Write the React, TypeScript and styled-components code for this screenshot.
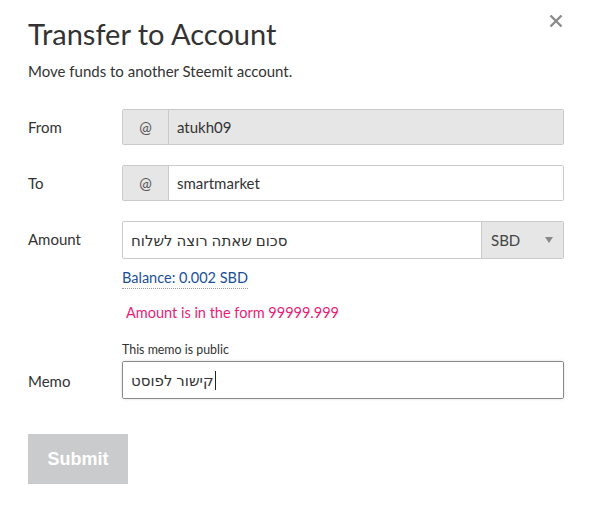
import React from "react";
import styled, { createGlobalStyle } from "styled-components";

const Global = createGlobalStyle`
  html, body { margin: 0; padding: 0; background: #fff; }
  body { font-family: Lato, "Open Sans", sans-serif; color: #333; }
  * { box-sizing: border-box; }
`;

const Modal = styled.div`
  position: relative;
  width: 595px;
  height: 516px;
  padding: 16px 31px 0 28px;
  display: flex;
  flex-direction: column;
  background: #fff;
`;

const Close = styled.button`
  position: absolute;
  top: 12px;
  right: 30px;
  width: 18px;
  height: 18px;
  padding: 0;
  border: 0;
  background: none;
  display: flex;
  align-items: center;
  justify-content: center;
`;

const Title = styled.h1`
  margin: 0;
  font-family: Lato, sans-serif;
  font-weight: 400;
  font-size: 29px;
  line-height: 36px;
  color: #333;
`;

const Subtitle = styled.p`
  margin: 9px 0 0;
  font-size: 15px;
  line-height: 20px;
  color: #333;
`;

const Row = styled.div<{ $mt: number }>`
  display: grid;
  grid-template-columns: 94px 1fr;
  align-items: center;
  margin-top: ${(p) => p.$mt}px;
`;

const Label = styled.label<{ $shift?: number }>`
  font-size: 15px;
  color: #333;
  position: relative;
  top: ${(p) => p.$shift ?? 0}px;
`;

const Group = styled.div<{ $h: number; $focus?: boolean }>`
  display: flex;
  height: ${(p) => p.$h}px;
  border: 1px solid ${(p) => (p.$focus ? "#8a8a8a" : "#cacaca")};
  border-radius: 2px;
  overflow: hidden;
  box-shadow: ${(p) => (p.$focus ? "0 0 3px rgba(0,0,0,0.15)" : "inset 0 1px 2px rgba(0,0,0,0.06)")};
`;

const Addon = styled.span`
  width: 46px;
  flex: none;
  display: flex;
  align-items: center;
  justify-content: center;
  background: #e6e6e6;
  border-right: 1px solid #cacaca;
  color: #555;
  font-size: 15px;
`;

const Field = styled.div<{ $disabled?: boolean }>`
  flex: 1;
  display: flex;
  align-items: center;
  padding: 0 8px;
  background: ${(p) => (p.$disabled ? "#e6e6e6" : "#fff")};
  color: #333;
  font-size: 15px;
  font-family: Lato, "Noto Sans", sans-serif;
`;

const Hebrew = styled.span`
  font-family: "Noto Sans", "DejaVu Sans", sans-serif;
  font-size: 15px;
  direction: rtl;
  unicode-bidi: isolate;
`;

const Caret = styled.span`
  display: inline-block;
  width: 1px;
  height: 19px;
  background: #222;
  margin-left: 1px;
`;

const Select = styled.div`
  width: 82px;
  flex: none;
  display: flex;
  align-items: center;
  justify-content: space-between;
  padding: 0 10px 0 9px;
  background: #e6e6e6;
  border-left: 1px solid #cacaca;
  color: #444;
  font-size: 15px;
`;

const Arrow = styled.span`
  width: 0;
  height: 0;
  border-left: 4px solid transparent;
  border-right: 4px solid transparent;
  border-top: 6px solid #888;
`;

const Under = styled.div<{ $mt: number; $pl?: number }>`
  margin-top: ${(p) => p.$mt}px;
  padding-left: ${(p) => 94 + (p.$pl ?? 0)}px;
  display: flex;
`;

const Balance = styled.span`
  font-size: 14.5px;
  line-height: 18px;
  color: #1a5099;
  border-bottom: 1px dotted #999;
  padding-bottom: 1px;
`;

const Error = styled.span`
  font-size: 14.5px;
  line-height: 20px;
  color: #e81e78;
`;

const Hint = styled.span`
  font-size: 12.4px;
  line-height: 15px;
  color: #333;
`;

const Submit = styled.button`
  margin-top: 35px;
  width: 100px;
  height: 50px;
  border: 0;
  border-radius: 0;
  background: #cacbcd;
  color: #fff;
  font-family: "Liberation Sans", Arial, sans-serif;
  font-weight: 700;
  font-size: 18px;
  padding: 0;
`;

export default function App() {
  return (
    <>
      <Global />
      <Modal>
        <Close aria-label="close">
          <svg width="14" height="14" viewBox="0 0 14 14">
            <path d="M1.5 1.5 L12.5 12.5 M12.5 1.5 L1.5 12.5" stroke="#8a8a8a" strokeWidth="2.4" strokeLinecap="butt" />
          </svg>
        </Close>
        <Title>Transfer to Account</Title>
        <Subtitle>Move funds to another Steemit account.</Subtitle>

        <Row $mt={28}>
          <Label>From</Label>
          <Group $h={36}>
            <Addon>@</Addon>
            <Field $disabled>atukh09</Field>
          </Group>
        </Row>

        <Row $mt={20}>
          <Label>To</Label>
          <Group $h={36}>
            <Addon>@</Addon>
            <Field>smartmarket</Field>
          </Group>
        </Row>

        <Row $mt={20}>
          <Label $shift={-1}>Amount</Label>
          <Group $h={38}>
            <Field>
              <Hebrew>סכום שאתה רוצה לשלוח</Hebrew>
            </Field>
            <Select>
              SBD
              <Arrow />
            </Select>
          </Group>
        </Row>

        <Under $mt={10}>
          <Balance>Balance: 0.002 SBD</Balance>
        </Under>
        <Under $mt={14} $pl={4}>
          <Error>Amount is in the form 99999.999</Error>
        </Under>
        <Under $mt={19}>
          <Hint>This memo is public</Hint>
        </Under>

        <Row $mt={4}>
          <Label $shift={1}>Memo</Label>
          <Group $h={38} $focus>
            <Field>
              <Hebrew>קישור לפוסט</Hebrew>
              <Caret />
            </Field>
          </Group>
        </Row>

        <div>
          <Submit>Submit</Submit>
        </div>
      </Modal>
    </>
  );
}
